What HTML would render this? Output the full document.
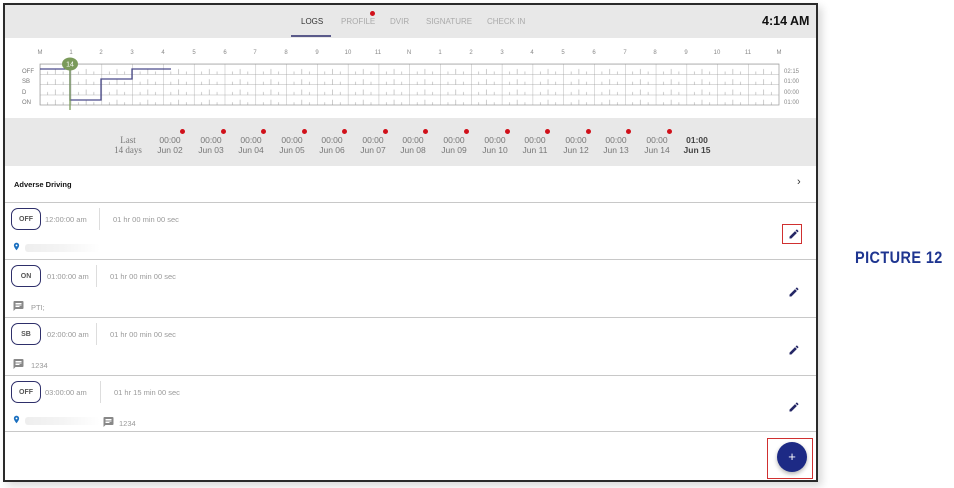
<!DOCTYPE html>
<html><head><meta charset="utf-8"><style>
*{margin:0;padding:0;box-sizing:border-box}
body{width:954px;height:488px;background:#fff;font-family:"Liberation Sans",sans-serif;position:relative;overflow:hidden}
.frame{position:absolute;left:3px;top:3px;width:815px;height:479px;border:2px solid #2a2a2a;background:#fff;box-shadow:4px 4px 8px rgba(0,0,0,.15);overflow:hidden}
.hdr{position:absolute;left:0;top:0;width:811px;height:33px;background:#e8e8e8}
.tab{position:absolute;top:12px;font-size:8px;color:#aaa}
.abs{position:absolute}
.strip{position:absolute;left:0;top:113px;width:811px;height:48px;background:#e8e8e8}
.d{position:absolute;top:130px;width:40px;text-align:center;font-size:8.5px;color:#777;line-height:10px}
.d i{position:absolute;right:5px;top:-6px;width:5px;height:5px;border-radius:50%;background:#d0101a}
.row{position:absolute;left:0;width:811px;border-top:1.5px solid #c8c8c8}
.pill{position:absolute;left:6px;top:5px;width:30px;height:22px;border:1.6px solid #2e2f6a;border-radius:7px;font-size:7px;font-weight:bold;color:#555;display:flex;align-items:center;justify-content:center}
.tm{position:absolute;top:12px;font-size:7.5px;color:#999}
.vl{position:absolute;top:5px;width:1px;height:22px;background:#ddd}
.pen{position:absolute;right:16px;width:12px;height:12px}
.blur{position:absolute;height:8px;background:linear-gradient(90deg,#eee,#f4f4f4,#fff);border-radius:3px}
</style></head><body>
<div class="frame">
<div class="hdr">
<div class="tab" style="left:296px;color:#333">LOGS</div>
<div class="abs" style="left:286px;top:30px;width:40px;height:2px;background:#5a5a8a"></div>
<div class="tab" style="left:336px">PROFILE</div>
<div class="abs" style="left:365px;top:6px;width:5px;height:5px;border-radius:50%;background:#d0101a"></div>
<div class="tab" style="left:385px">DVIR</div>
<div class="tab" style="left:421px">SIGNATURE</div>
<div class="tab" style="left:482px">CHECK IN</div>
<div class="abs" style="left:757px;top:9px;font-size:12.5px;font-weight:bold;color:#111">4:14 AM</div>
</div>
<svg class="abs" style="left:0;top:33px" width="811" height="80">
<defs><pattern id="p" x="35" y="26" width="30.79" height="10.25" patternUnits="userSpaceOnUse">
<line x1="7.7" y1="10.25" x2="7.7" y2="7.5" stroke="#aaa" stroke-width=".6"/>
<line x1="15.4" y1="10.25" x2="15.4" y2="5" stroke="#aaa" stroke-width=".6"/>
<line x1="23.1" y1="10.25" x2="23.1" y2="7.5" stroke="#aaa" stroke-width=".6"/>
<line x1="0" y1="0" x2="0" y2="10.25" stroke="#999" stroke-width=".7"/>
<line x1="0" y1="0" x2="30.79" y2="0" stroke="#999" stroke-width=".7"/>
</pattern></defs>
<rect x="35" y="26" width="739" height="41" fill="url(#p)" stroke="#999" stroke-width=".7"/>
<g font-size="6" fill="#888" text-anchor="middle">
<text x="35" y="16">M</text><text x="66" y="16">1</text><text x="96" y="16">2</text><text x="127" y="16">3</text><text x="158" y="16">4</text><text x="189" y="16">5</text><text x="220" y="16">6</text><text x="250" y="16">7</text><text x="281" y="16">8</text><text x="312" y="16">9</text><text x="343" y="16">10</text><text x="373" y="16">11</text><text x="404" y="16">N</text><text x="435" y="16">1</text><text x="466" y="16">2</text><text x="497" y="16">3</text><text x="527" y="16">4</text><text x="558" y="16">5</text><text x="589" y="16">6</text><text x="620" y="16">7</text><text x="650" y="16">8</text><text x="681" y="16">9</text><text x="712" y="16">10</text><text x="743" y="16">11</text><text x="774" y="16">M</text>
</g>
<g font-size="6" fill="#777"><text x="17" y="35">OFF</text><text x="17" y="45">SB</text><text x="17" y="56">D</text><text x="17" y="66">ON</text></g>
<g font-size="6" fill="#888"><text x="779" y="35">02:15</text><text x="779" y="45">01:00</text><text x="779" y="56">00:00</text><text x="779" y="66">01:00</text></g>
<polyline points="35,31 65,31 65,62 96,62 96,41 127,41 127,31 166,31" fill="none" stroke="#4a4a8a" stroke-width="1.3"/>
<line x1="65" y1="26" x2="65" y2="72" stroke="#7a9a5a" stroke-width="1.3"/>
<ellipse cx="65" cy="26" rx="8" ry="6.5" fill="#7a9a5a"/>
<text x="65" y="28.5" font-size="7" fill="#fff" text-anchor="middle">14</text>
</svg>
<div class="strip"></div>
<div class="d" style="left:103px;font-family:'Liberation Serif',serif;font-size:9px">Last<br>14 days</div>
<div class="d" style="left:145px">00:00<br>Jun 02<i></i></div>
<div class="d" style="left:186px">00:00<br>Jun 03<i></i></div>
<div class="d" style="left:226px">00:00<br>Jun 04<i></i></div>
<div class="d" style="left:267px">00:00<br>Jun 05<i></i></div>
<div class="d" style="left:307px">00:00<br>Jun 06<i></i></div>
<div class="d" style="left:348px">00:00<br>Jun 07<i></i></div>
<div class="d" style="left:388px">00:00<br>Jun 08<i></i></div>
<div class="d" style="left:429px">00:00<br>Jun 09<i></i></div>
<div class="d" style="left:470px">00:00<br>Jun 10<i></i></div>
<div class="d" style="left:510px">00:00<br>Jun 11<i></i></div>
<div class="d" style="left:551px">00:00<br>Jun 12<i></i></div>
<div class="d" style="left:591px">00:00<br>Jun 13<i></i></div>
<div class="d" style="left:632px">00:00<br>Jun 14<i></i></div>
<div class="d" style="left:672px;color:#444;font-weight:bold">01:00<br>Jun 15</div>
<div class="abs" style="left:9px;top:175px;font-size:7.5px;font-weight:bold;color:#111">Adverse Driving</div>
<div class="abs" style="left:792px;top:171px;font-size:11px;color:#333">›</div>

<div class="row" style="top:197px;height:57px">
<div class="pill">OFF</div><div class="tm" style="left:40px">12:00:00 am</div><div class="vl" style="left:94px"></div><div class="tm" style="left:108px">01 hr 00 min 00 sec</div>
<svg class="abs" style="left:7px;top:38px" width="9" height="11" viewBox="0 0 24 24"><path d="M12 2C8.1 2 5 5.1 5 9c0 5.2 7 13 7 13s7-7.8 7-13c0-3.9-3.1-7-7-7zm0 9.5a2.5 2.5 0 110-5 2.5 2.5 0 010 5z" fill="#1a6fbf"/></svg>
<div class="blur" style="left:20px;top:41px;width:75px"></div>
<div class="abs" style="left:777px;top:21px;width:20px;height:20px;border:1.5px solid #d03030"></div>
<svg class="pen" style="top:25px" viewBox="0 0 24 24"><path d="M3 17.25V21h3.75L17.8 9.94l-3.75-3.75L3 17.25zM20.7 7.04a1 1 0 000-1.41l-2.34-2.34a1 1 0 00-1.41 0l-1.83 1.83 3.75 3.75 1.83-1.83z" fill="#252766"/></svg>
</div>
<div class="row" style="top:254px;height:58px">
<div class="pill">ON</div><div class="tm" style="left:42px">01:00:00 am</div><div class="vl" style="left:91px"></div><div class="tm" style="left:105px">01 hr 00 min 00 sec</div>
<svg class="abs" style="left:7px;top:40px" width="13" height="12" viewBox="0 0 24 24"><path d="M20 2H4c-1.1 0-2 .9-2 2v18l4-4h14c1.1 0 2-.9 2-2V4c0-1.1-.9-2-2-2zM6 9h12v2H6zm8 5H6v-2h8zm4-6H6V6h12z" fill="#888"/></svg>
<div class="tm" style="left:26px;top:43px">PTI;</div>
<svg class="pen" style="top:26px" viewBox="0 0 24 24"><path d="M3 17.25V21h3.75L17.8 9.94l-3.75-3.75L3 17.25zM20.7 7.04a1 1 0 000-1.41l-2.34-2.34a1 1 0 00-1.41 0l-1.83 1.83 3.75 3.75 1.83-1.83z" fill="#252766"/></svg>
</div>
<div class="row" style="top:312px;height:58px">
<div class="pill">SB</div><div class="tm" style="left:42px">02:00:00 am</div><div class="vl" style="left:91px"></div><div class="tm" style="left:105px">01 hr 00 min 00 sec</div>
<svg class="abs" style="left:7px;top:40px" width="13" height="12" viewBox="0 0 24 24"><path d="M20 2H4c-1.1 0-2 .9-2 2v18l4-4h14c1.1 0 2-.9 2-2V4c0-1.1-.9-2-2-2zM6 9h12v2H6zm8 5H6v-2h8zm4-6H6V6h12z" fill="#888"/></svg>
<div class="tm" style="left:26px;top:43px">1234</div>
<svg class="pen" style="top:26px" viewBox="0 0 24 24"><path d="M3 17.25V21h3.75L17.8 9.94l-3.75-3.75L3 17.25zM20.7 7.04a1 1 0 000-1.41l-2.34-2.34a1 1 0 00-1.41 0l-1.83 1.83 3.75 3.75 1.83-1.83z" fill="#252766"/></svg>
</div>
<div class="row" style="top:370px;height:57px;border-bottom:1.5px solid #c8c8c8">
<div class="pill">OFF</div><div class="tm" style="left:40px">03:00:00 am</div><div class="vl" style="left:95px"></div><div class="tm" style="left:109px">01 hr 15 min 00 sec</div>
<svg class="abs" style="left:7px;top:38px" width="9" height="11" viewBox="0 0 24 24"><path d="M12 2C8.1 2 5 5.1 5 9c0 5.2 7 13 7 13s7-7.8 7-13c0-3.9-3.1-7-7-7zm0 9.5a2.5 2.5 0 110-5 2.5 2.5 0 010 5z" fill="#1a6fbf"/></svg>
<div class="blur" style="left:20px;top:41px;width:75px"></div>
<svg class="abs" style="left:97px;top:40px" width="13" height="12" viewBox="0 0 24 24"><path d="M20 2H4c-1.1 0-2 .9-2 2v18l4-4h14c1.1 0 2-.9 2-2V4c0-1.1-.9-2-2-2zM6 9h12v2H6zm8 5H6v-2h8zm4-6H6V6h12z" fill="#888"/></svg>
<div class="tm" style="left:114px;top:43px">1234</div>
<svg class="pen" style="top:25px" viewBox="0 0 24 24"><path d="M3 17.25V21h3.75L17.8 9.94l-3.75-3.75L3 17.25zM20.7 7.04a1 1 0 000-1.41l-2.34-2.34a1 1 0 00-1.41 0l-1.83 1.83 3.75 3.75 1.83-1.83z" fill="#252766"/></svg>
</div>
<div class="abs" style="left:762px;top:433px;width:46px;height:41px;border:1.5px solid #d03030"></div>
<div class="abs" style="left:772px;top:437px;width:30px;height:30px;border-radius:50%;background:#1d2a85;color:#fff;font-size:13px;text-align:center;line-height:29px;box-shadow:0 2px 4px rgba(0,0,0,.3)">+</div>
</div>
<div class="abs" style="left:855px;top:248px;font-size:17px;font-weight:bold;color:#1e3590;letter-spacing:0.5px;white-space:nowrap;transform:scaleX(.85);transform-origin:left">PICTURE 12</div>
</body></html>
